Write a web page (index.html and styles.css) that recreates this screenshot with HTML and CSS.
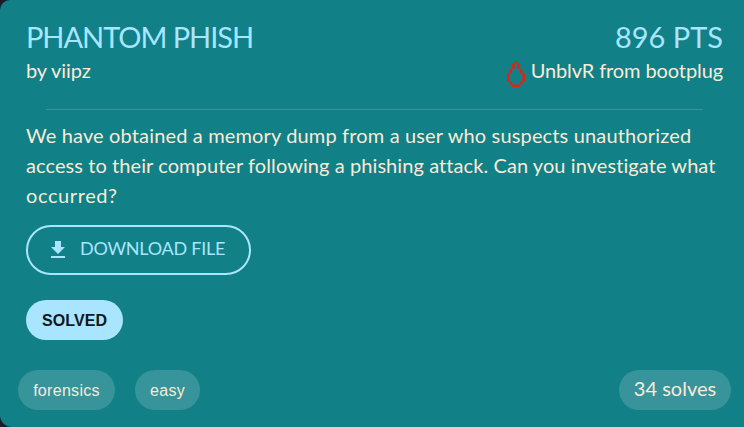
FILE: index.html
```
<!DOCTYPE html>
<html lang="en">
<head>
<meta charset="utf-8">
<title>Phantom Phish</title>
<link rel="stylesheet" href="styles.css">
</head>
<body>
<article class="card">
  <header class="head">
    <div>
      <h1 class="title name">PHANTOM PHISH</h1>
      <p class="meta author">by viipz</p>
    </div>
    <div class="right">
      <p class="title points">896 PTS</p>
      <p class="meta blood">
        <svg class="drop" viewBox="0 0 21 30" preserveAspectRatio="none"><path d="M9 0h3v3H9zM6 3h3v6H6zM12 3h3v6h-3zM3 9h3v5H3zM15 9h3v5h-3zM0 14h3v10H0zM18 14h3v10h-3zM3 24h3v3H3zM15 24h3v3h-3zM6 27h9v3H6z"/></svg>
        <span class="solver">UnblvR from bootplug</span>
      </p>
    </div>
  </header>
  <hr class="rule">
  <p class="description"><span class="l1">We have obtained a memory dump from a user who suspects unauthorized</span><br><span class="l2">access to their computer following a phishing attack. Can you investigate what</span><br><span class="l3">occurred?</span></p>
  <a class="download"><svg class="arrow" viewBox="0 0 24 24"><path d="M19 9h-4V3H9v6H5l7 7 7-7zM5 18v2h14v-2H5z"/></svg><span class="label">DOWNLOAD FILE</span></a>
  <div class="solved">SOLVED</div>
  <footer class="foot">
    <span class="tag forensics">forensics</span>
    <span class="tag easy">easy</span>
    <span class="tag solves">34 solves</span>
  </footer>
</article>
</body>
</html>
```
FILE: styles.css
```
* { box-sizing: border-box; }
body { margin: 0; background: #1b1e29; }
h1, p { margin: 0; font-weight: 400; }
.card {
  height: 427px;
  padding: 17px 21px 0 26px;
  border-radius: 10px 0 0 12px;
  background: #118087;
  color: #faebd7;
  font: 20px/30px Lato, sans-serif;
  font-variant-ligatures: none;
  white-space: nowrap;
  overflow: hidden;
}
.head { display: flex; justify-content: space-between; height: 92px; }
.title { font-size: 29px; line-height: 40px; color: #a9e5ff; }
.name { letter-spacing: -1.05px; }
.meta { line-height: 26px; }
.author { letter-spacing: -0.1px; }
.right { text-align: right; }
.blood { display: flex; justify-content: flex-end; }
.drop { width: 18px; height: 26px; margin: 4px 6px 0 0; fill: #ee1c0c; }
.solver { letter-spacing: -0.1px; }
.rule { height: 1px; margin: 0 20px; border: 0; background: #36959d; }
.description { margin-top: 10px; height: 90px; }
.l1 { letter-spacing: 0.15px; }
.l2 { letter-spacing: 0.08px; }
.l3 { letter-spacing: 0.6px; }
.download {
  display: flex;
  align-items: center;
  width: 225px;
  height: 50px;
  margin-top: 15px;
  padding-left: 20px;
  border: 2px solid #a9e5ff;
  border-radius: 25px;
  color: #a9e5ff;
  font-size: 18px;
}
.arrow { width: 24px; height: 24px; margin: 0 10px 0 -2px; fill: currentColor; }
.label { margin-bottom: 4px; letter-spacing: -0.25px; }
.solved {
  width: 97px;
  height: 40px;
  margin-top: 25px;
  border-radius: 20px;
  background: #a9e5ff;
  color: #101820;
  font: bold 16px/41px "Liberation Sans", sans-serif;
  letter-spacing: 0.1px;
  text-align: center;
}
.foot { display: flex; gap: 20px; margin: 30px -8px 0; }
.tag {
  height: 40px;
  border-radius: 20px;
  background: #37949a;
  font: 16px/41px "Liberation Sans", sans-serif;
  letter-spacing: 0.3px;
  text-align: center;
}
.forensics { width: 97px; }
.easy { width: 65px; }
.solves { width: 112px; margin-left: auto; font: 20px/37px Lato, sans-serif; letter-spacing: 0; }
```
